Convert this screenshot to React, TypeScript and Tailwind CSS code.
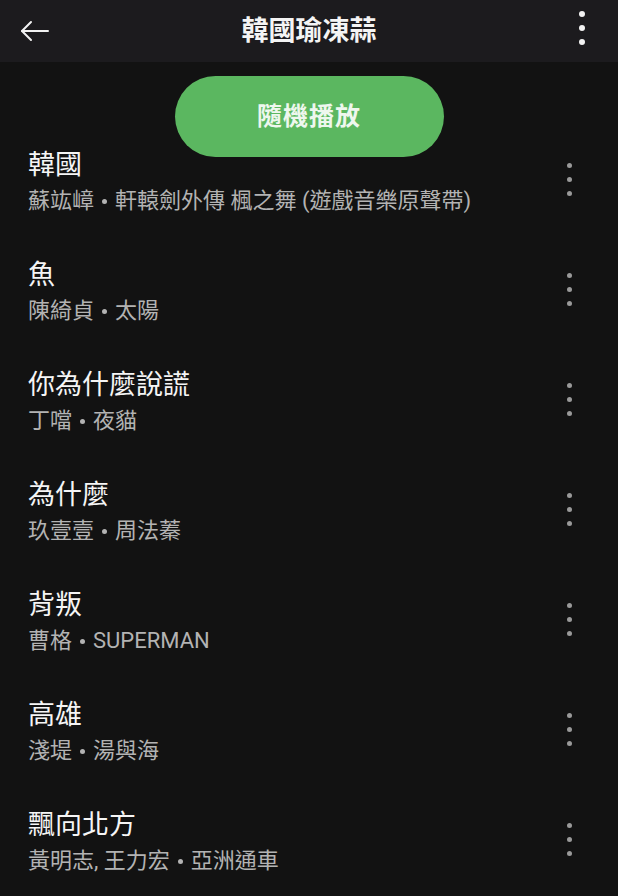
import React from "react";

const songs = [
  { title: "韓國", sub: ["蘇竑嶂", "軒轅劍外傳 楓之舞 (遊戲音樂原聲帶)"] },
  { title: "魚", sub: ["陳綺貞", "太陽"] },
  { title: "你為什麼說謊", sub: ["丁噹", "夜貓"] },
  { title: "為什麼", sub: ["玖壹壹", "周法蓁"] },
  { title: "背叛", sub: ["曹格", "SUPERMAN"] },
  { title: "高雄", sub: ["淺堤", "湯與海"] },
  { title: "飄向北方", sub: ["黃明志, 王力宏", "亞洲通車"] },
];

function Kebab({ dot = "bg-[#9a9a9a]", size = "w-[5px] h-[5px]", gap = "gap-[9px]" }) {
  return (
    <div className={`flex flex-col items-center ${gap}`}>
      <span className={`${size} rounded-full ${dot}`} />
      <span className={`${size} rounded-full ${dot}`} />
      <span className={`${size} rounded-full ${dot}`} />
    </div>
  );
}

export default function App() {
  return (
    <div
      className="w-[618px] h-[896px] overflow-hidden bg-[#121212] text-white"
      style={{ fontFamily: 'Roboto, "Noto Sans CJK TC", sans-serif' }}
    >
      {/* top bar */}
      <div className="h-[62px] bg-[#1c1b1e] flex items-center px-[20px]">
        <div className="w-[60px]">
          <svg width="30" height="22" viewBox="0 0 30 22" fill="none" stroke="#f2f2f2" strokeWidth="2" strokeLinecap="round" strokeLinejoin="round">
            <path d="M28 11H2" />
            <path d="M11 2L2 11l9 9" />
          </svg>
        </div>
        <h1 className="flex-1 text-center text-[27px] font-bold leading-none text-[#f4f4f4]">
          韓國瑜凍蒜
        </h1>
        <div className="w-[60px] flex justify-end pr-[13px] -mt-[6px]">
          <Kebab dot="bg-[#f2f2f2]" size="w-[6px] h-[6px]" gap="gap-[8px]" />
        </div>
      </div>

      {/* shuffle */}
      <div className="flex justify-center pt-[14px]">
        <button className="w-[269px] h-[81px] rounded-full bg-[#5bb760] text-[25px] font-bold text-[#eef7ee] tracking-[1px]">
          隨機播放
        </button>
      </div>

      {/* list */}
      <ul className="-mt-[9px]">
        {songs.map((s) => (
          <li key={s.title} className="h-[110px] flex pl-[28px] pr-[46px]">
            <div className="flex-1">
              <div className="pt-[2px] text-[27px] leading-[30px] text-[#f5f5f5]">{s.title}</div>
              <div className="mt-[8px] text-[22px] leading-[26px] text-[#b3b3b3] flex items-center">
                <span>{s.sub[0]}</span>
                <span className="mx-[8px] w-[5px] h-[5px] rounded-full bg-[#b3b3b3]" />
                <span>{s.sub[1]}</span>
              </div>
            </div>
            <div className="pt-[15px]">
              <Kebab />
            </div>
          </li>
        ))}
      </ul>
    </div>
  );
}
